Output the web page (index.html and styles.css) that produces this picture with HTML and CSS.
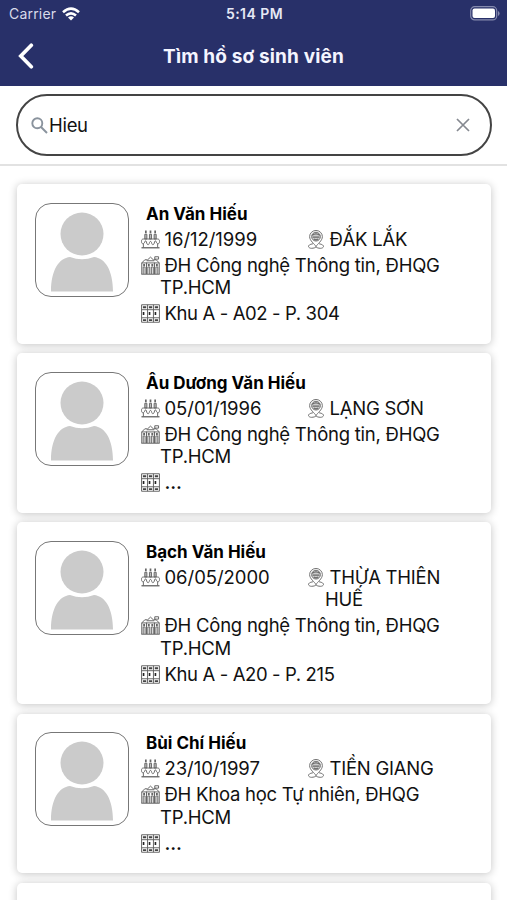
FILE: index.html
```html
<!DOCTYPE html>
<html lang="vi">
<head>
<meta charset="utf-8">
<meta name="viewport" content="width=device-width">
<title>Tìm hồ sơ sinh viên</title>
<link rel="stylesheet" href="styles.css">
</head>
<body>
<svg class="defs" aria-hidden="true">
  <symbol id="cake" viewBox="0 0 20 20">
    <g fill="none" stroke="#666" stroke-width="1">
      <path d="M4 4.500h2.200v5H4zM8.900 4.500h2.200v5H8.900zM13.800 4.500H16v5h-2.200z" fill="#bbb"/>
      <path d="M5.100.5v3M10 .5v3M14.900.5v3" stroke-width="1.800"/>
      <path d="M2.500 18.500v-4M17.500 18.500v-4M2.500 9.500h15c1.500 0 2 1 2 2.500 0 3-2.500 3.500-3.500.5-.5-1.500-1.300-1.500-1.700 0-.8 4-2.600 4-3.300.5-.4-1.300-1.600-1.300-2 0-.7 3.500-2.500 3.500-3.300-.5-.4-1.500-1.200-1.500-1.700 0-1 3-3.500 2.500-3.500-.5 0-1.500.5-2.500 2-2.500z"/>
      <path d="M.5 18.700h19" stroke-width="1.400"/>
    </g>
  </symbol>
  <symbol id="school" viewBox="0 0 20 20">
    <g fill="none" stroke="#606060" stroke-width="1">
      <path d="M.8 19V7.300h18.400V19M.8 7.300L4 4h3l3-2.800L13 4h3l3.200 3.300M5.800 19V7M14.200 19V7M.3 19.200h19.400"/>
      <path d="M14.500 4V.8h4v2.500h-4M6 5h8" />
      <path d="M2.300 19v-7.500h2V19M7.200 19v-7.500h2V19M10.900 19v-7.500h2V19M15.700 19v-7.500h2V19"/>
      <path d="M2.300 9.500h2M7.200 9.500h2M10.900 9.500h2M15.700 9.500h2" stroke="#333" stroke-width="1.500"/>
    </g>
  </symbol>
  <symbol id="room" viewBox="0 0 20 20">
    <g fill="none" stroke="#606060" stroke-width="1">
      <path d="M.6.8h18.800v18.400H.6zM6.900.8v18.400M13.100.8v18.400M.6 14.500h18.800M.6 6h18.800"/>
      <path d="M2 3.400h3.500M8.300 3.400h3.500M14.500 3.400H18M2 17h3.500M8.300 17h3.500M14.500 17H18" stroke="#444" stroke-width="2"/>
      <path d="M2.700 8.500v3M9 8.500v3M15.200 8.500v3" stroke="#222" stroke-width="1.700"/>
    </g>
  </symbol>
  <symbol id="pin" viewBox="0 0 16 20">
    <g fill="none" stroke="#6a6a6a" stroke-width="1">
      <path d="M8 17.500C6.500 14.500 1.300 11.500 1.300 7a6.700 6.500 0 0 1 13.400 0c0 4.500-5.200 7.500-6.700 10.500z"/>
      <circle cx="8" cy="7" r="4.600" fill="#ccc"/>
      <path d="M4 5.500q4-3 8 0M4.500 7.500h7M6 9.500q2 1.500 4 0" stroke-width="1.200"/>
      <path d="M4.800 14.500C-2 15.500-.5 19.300 3.500 19.300q3 0 4.500-1.500 1.500 1.500 4.500 1.500c4 0 5.500-3.800-1.300-4.800"/>
    </g>
  </symbol>
  <symbol id="person" viewBox="0 0 92 92">
    <circle cx="46" cy="30" r="21.500"/>
    <path d="M15 87.500C15 66 23 54 34 53q12 4.500 24 0c11 1 19 13 19 34.500z"/>
  </symbol>
</svg>

<header class="header">
  <div class="status">
    <div class="carrier">Carrier
      <svg class="wifi" viewBox="0 0 18 14"><g fill="none" stroke="#fff" stroke-width="2.600"><path d="M1 5.200q8-7 16 0M4 8.500q5-4.300 10 0"/></g><path d="M6 10.500q3-2.400 6 0L9 13.600z" fill="#fff"/></svg>
    </div>
    <div class="time">5:14 PM</div>
    <svg class="battery" viewBox="0 0 30 15"><rect x=".7" y=".7" width="26" height="13.200" rx="4" fill="none" stroke="#858aae" stroke-width="1.200"/><rect x="2.500" y="2.500" width="22.500" height="9.600" rx="2" fill="#fff"/><path d="M28 5v5q1.600-.8 1.600-2.500T28 5z" fill="#858aae"/></svg>
  </div>
  <div class="navbar">
    <svg class="back" viewBox="0 0 16 26"><path d="M13.300 2.300L2.800 13l10.500 10.700" fill="none" stroke="#fff" stroke-width="3.700" stroke-linecap="round" stroke-linejoin="miter"/></svg>
    <h1 class="title">Tìm hồ sơ sinh viên</h1>
  </div>
</header>

<div class="search">
  <div class="field">
    <svg class="lens" viewBox="0 0 17 17"><g fill="none" stroke="#8a939d" stroke-width="1.900"><circle cx="6.300" cy="6.300" r="5"/><path d="M10 10l6 6"/></g></svg>
    <span class="query">Hieu</span>
    <svg class="clear" viewBox="0 0 14 14"><path d="M1 1l12 12M13 1L1 13" stroke="#858990" stroke-width="1.700"/></svg>
  </div>
</div>

<main class="list">
  <article class="card">
    <svg class="avatar"><use href="#person"/></svg>
    <div class="info">
      <h2 class="name">An Văn Hiếu</h2>
      <div class="pair">
        <div class="row"><svg class="icon"><use href="#cake"/></svg><p class="text date">16/12/1999</p></div>
        <div class="row place"><svg class="icon pin"><use href="#pin"/></svg><p class="text">ĐẮK LẮK</p></div>
      </div>
      <div class="row"><svg class="icon"><use href="#school"/></svg><p class="text">ĐH Công nghệ Thông tin, ĐHQG<br>TP.HCM</p></div>
      <div class="row"><svg class="icon"><use href="#room"/></svg><p class="text room">Khu A - A02 - P. 304</p></div>
    </div>
  </article>

  <article class="card">
    <svg class="avatar"><use href="#person"/></svg>
    <div class="info">
      <h2 class="name">Âu Dương Văn Hiếu</h2>
      <div class="pair">
        <div class="row"><svg class="icon"><use href="#cake"/></svg><p class="text date">05/01/1996</p></div>
        <div class="row place"><svg class="icon pin"><use href="#pin"/></svg><p class="text">LẠNG SƠN</p></div>
      </div>
      <div class="row"><svg class="icon"><use href="#school"/></svg><p class="text">ĐH Công nghệ Thông tin, ĐHQG<br>TP.HCM</p></div>
      <div class="row"><svg class="icon"><use href="#room"/></svg><p class="text empty">...</p></div>
    </div>
  </article>

  <article class="card">
    <svg class="avatar"><use href="#person"/></svg>
    <div class="info">
      <h2 class="name">Bạch Văn Hiếu</h2>
      <div class="pair">
        <div class="row"><svg class="icon"><use href="#cake"/></svg><p class="text date">06/05/2000</p></div>
        <div class="row place"><svg class="icon pin"><use href="#pin"/></svg><p class="text">THỪA THIÊN<br>HUẾ</p></div>
      </div>
      <div class="row"><svg class="icon"><use href="#school"/></svg><p class="text">ĐH Công nghệ Thông tin, ĐHQG<br>TP.HCM</p></div>
      <div class="row"><svg class="icon"><use href="#room"/></svg><p class="text room">Khu A - A20 - P. 215</p></div>
    </div>
  </article>

  <article class="card">
    <svg class="avatar"><use href="#person"/></svg>
    <div class="info">
      <h2 class="name">Bùi Chí Hiếu</h2>
      <div class="pair">
        <div class="row"><svg class="icon"><use href="#cake"/></svg><p class="text date">23/10/1997</p></div>
        <div class="row place"><svg class="icon pin"><use href="#pin"/></svg><p class="text">TIỀN GIANG</p></div>
      </div>
      <div class="row"><svg class="icon"><use href="#school"/></svg><p class="text">ĐH Khoa học Tự nhiên, ĐHQG<br>TP.HCM</p></div>
      <div class="row"><svg class="icon"><use href="#room"/></svg><p class="text empty">...</p></div>
    </div>
  </article>

  <article class="card next"></article>
</main>
</body>
</html>
```
FILE: styles.css
```css
* { box-sizing: border-box; }

body {
  margin: 0;
  height: 900px;
  overflow: hidden;
  display: flex;
  flex-direction: column;
  background: #fff;
  color: #111;
  font-family: Inter, "Noto Sans", sans-serif;
}

h1, h2, p { margin: 0; }

.defs { display: none; }

.header {
  flex: none;
  height: 86px;
  background: #283069;
  color: #fff;
}

.status {
  height: 27px;
  padding: 0 7px 0 9px;
  display: grid;
  grid-template-columns: 1fr auto 1fr;
  align-items: center;
  font-size: 14px;
  line-height: 27px;
}

.carrier {
  display: flex;
  align-items: center;
  gap: 6px;
  color: #d9dbea;
  letter-spacing: 0.2px;
}

.wifi { width: 18px; height: 14px; }

.time {
  font-weight: 600;
  font-size: 14px;
  letter-spacing: 0.45px;
  color: #e6e8f5;
}

.battery { width: 30px; height: 15px; justify-self: end; }

.navbar {
  height: 59px;
  display: grid;
  grid-template-columns: 60px 1fr 60px;
  align-items: center;
}

.back { width: 16px; height: 26px; margin: -2px 0 0 18px; }

.title {
  text-align: center;
  font-size: 19px;
  font-weight: 650;
  letter-spacing: 0.15px;
  line-height: 24px;
  color: #f4f5ff;
}

.search {
  flex: none;
  height: 80px;
  padding: 8px 15px 0 16px;
  border-bottom: 2px solid #e2e2e2;
}

.field {
  height: 62px;
  padding: 0 20px 0 13px;
  border: 2px solid #444;
  border-radius: 31px;
  display: flex;
  align-items: center;
}

.lens { width: 17px; height: 17px; margin-right: 1px; }

.query {
  flex: 1;
  margin-top: -1px;
  font-size: 18.5px;
  letter-spacing: -0.3px;
  line-height: 24px;
}

.clear { width: 14px; height: 14px; }

.list {
  flex: 1;
  min-height: 0;
  overflow: hidden;
  padding: 18px 16px 0 17px;
  display: flex;
  flex-direction: column;
  gap: 9.5px;
}

.card {
  flex: none;
  display: flex;
  gap: 12px;
  padding: 18.5px 18px 18.5px 18px;
  border-radius: 5px;
  background: #fff;
  box-shadow: 0 1px 8px rgba(0, 0, 0, 0.24);
}

.card.next { height: 160px; }

.avatar {
  flex: none;
  width: 94px;
  height: 94px;
  border: 1.5px solid #777;
  border-radius: 16px;
  fill: #cbcbcb;
}

.info {
  flex: 1;
  display: flex;
  flex-direction: column;
  gap: 3.5px;
  font-size: 18.5px;
  line-height: 22.5px;
}

.name {
  margin-bottom: -0.5px;
  padding-left: 5px;
  font-size: 17px;
  line-height: 22.5px;
  font-weight: 700;
  color: #000;
}

.pair {
  display: grid;
  grid-template-columns: 166.5px 1fr;
}

.row { display: flex; align-items: flex-start; }

.icon {
  flex: none;
  width: 19px;
  height: 19px;
  margin-top: 1.5px;
}

.icon.pin { width: 16px; height: 19px; margin-right: 1.5px; }

.text {
  margin-top: -0.5px;
  margin-bottom: 0.5px;
  text-indent: 4.5px;
  letter-spacing: -0.25px;
  white-space: nowrap;
}

.text.date { letter-spacing: -0.05px; }

.text.room { letter-spacing: -0.38px; }

.text.empty { font-weight: 600; letter-spacing: -0.1px; }
```
